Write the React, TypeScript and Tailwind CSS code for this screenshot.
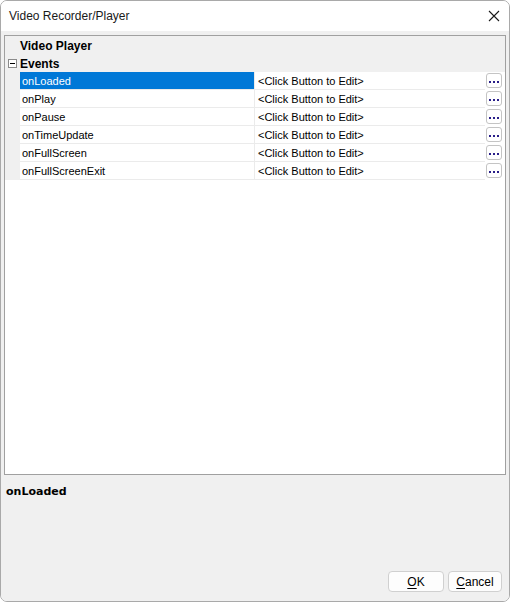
const events = ["onLoaded", "onPlay", "onPause", "onTimeUpdate", "onFullScreen", "onFullScreenExit"];

function EllipsisButton() {
  return (
    <div className="flex h-[15px] w-[16px] items-center justify-center gap-[2px] rounded-[3px] border border-[#c4c4c4] bg-white pt-[3px]">
      <span className="h-[2px] w-[2px] bg-[#2a1f8a]" />
      <span className="h-[2px] w-[2px] bg-[#2a1f8a]" />
      <span className="h-[2px] w-[2px] bg-[#2a1f8a]" />
    </div>
  );
}

function PropertyRow({ name, selected }: { name: string; selected: boolean }) {
  return (
    <div className="flex h-[18px]">
      <div className="w-[15px] shrink-0 bg-[#f0f0f0]" />
      <div className="flex flex-1 border-b border-[#ebebeb]">
        <div
          className={`flex w-[234px] shrink-0 items-center pl-[2px] pt-[2px] ${
            selected ? "bg-[#0078d7] text-white" : "text-black"
          }`}
        >
          {name}
        </div>
        <div className="w-px shrink-0 bg-[#ebebeb]" />
        <div className="flex flex-1 items-center pl-[3px] pt-[2px] text-black">&lt;Click Button to Edit&gt;</div>
      </div>
      <div className="flex w-[20px] shrink-0 items-start pl-[1px] pt-[1px]">
        <EllipsisButton />
      </div>
    </div>
  );
}

function DialogButton({ label, hotkey, width }: { label: string; hotkey: string; width: string }) {
  return (
    <button
      className={`flex h-[21px] ${width} items-center justify-center rounded-[4px] border border-[#d0d0d0] bg-[#fdfdfd] text-[12px] text-black`}
    >
      <span className="underline underline-offset-2">{hotkey}</span>
      {label}
    </button>
  );
}

export default function App() {
  return (
    <div
      className="h-[602px] w-[510px] bg-white"
      style={{ fontFamily: '"Liberation Sans", Arial, sans-serif' }}
    >
      <div className="flex h-[602px] w-[510px] flex-col overflow-hidden rounded-[7px] border border-[#a9a9a9]">
        <div className="flex h-[30px] shrink-0 items-center justify-between bg-white pl-[8px] pr-[10px]">
          <span className="text-[12px] text-[#1a1a1a]">Video Recorder/Player</span>
          <svg width="12" height="12" viewBox="0 0 12 12" className="mr-[-1px]">
            <path d="M1 1 L11 11 M11 1 L1 11" stroke="#1a1a1a" strokeWidth="1.1" />
          </svg>
        </div>
        <div className="flex flex-1 flex-col bg-[#f0f0f0] px-[3px]">
          <div className="mt-[4px] flex h-[440px] flex-col border border-[#a0a0a0] bg-white text-[11px]">
            <div className="flex h-[18px] items-center bg-[#f0f0f0] pl-[15px] pt-[2px] text-[12px] font-bold text-black">
              Video Player
            </div>
            <div className="flex h-[18px] items-center bg-[#f0f0f0] text-[12px] font-bold text-black">
              <div className="flex w-[15px] justify-center pt-[1px]">
                <div className="flex h-[9px] w-[9px] items-center justify-center border border-[#8a8a8a] bg-white">
                  <div className="h-px w-[5px] bg-black" />
                </div>
              </div>
              <span className="pt-[2px]">Events</span>
            </div>
            {events.map((e, i) => (
              <PropertyRow key={e} name={e} selected={i === 0} />
            ))}
          </div>
          <div
            className="ml-[2px] mt-[9px] text-[11px] font-bold text-black"
            style={{ fontFamily: '"DejaVu Sans", Verdana, sans-serif' }}
          >
            onLoaded
          </div>
          <div className="flex-1" />
          <div className="flex justify-end gap-[4px] pb-[9px] pr-[4px]">
            <DialogButton hotkey="O" label="K" width="w-[56px]" />
            <DialogButton hotkey="C" label="ancel" width="w-[54px]" />
          </div>
        </div>
      </div>
    </div>
  );
}
